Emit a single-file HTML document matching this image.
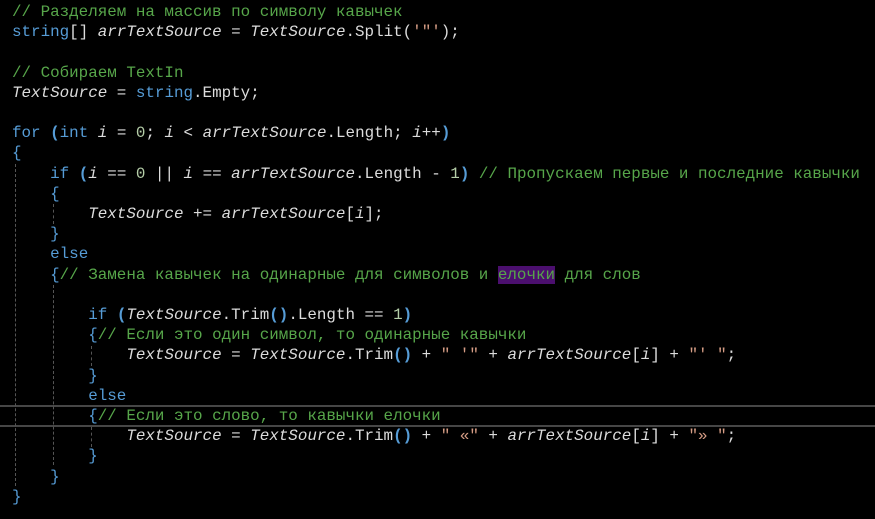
<!DOCTYPE html><html><head><meta charset="utf-8"><style>
html,body{margin:0;background:#000;width:875px;height:519px;overflow:hidden}
pre{margin:0;position:absolute;left:12px;top:2px;font-family:"Liberation Mono","DejaVu Sans Mono",monospace;font-size:15.88px;line-height:20.2px;color:#dcdcdc;white-space:pre}
.k{color:#569cd6}.c{color:#57a64a}.v{font-style:italic;color:#dcdcdc}.s{color:#d69d85}.n{color:#b5cea8}.p{color:#569cd6;font-weight:bold}.hl{background:#4b0f6e}
.g{position:absolute;width:0;border-left:1px dashed #555}
.cur{position:absolute;left:0;width:875px;top:405px;height:18px;border-top:2px solid #464646;border-bottom:2px solid #464646}
</style></head><body>
<div class="cur"></div>
<div class="g" style="left:15px;top:164px;height:322px"></div>
<div class="g" style="left:53px;top:204px;height:20px"></div>
<div class="g" style="left:53px;top:285px;height:180px"></div>
<div class="g" style="left:91px;top:346px;height:20px"></div>
<div class="g" style="left:91px;top:427px;height:20px"></div>
<pre><span class="c">// Разделяем на массив по символу кавычек</span>
<span class="k">string</span>[] <span class="v">arrTextSource</span> = <span class="v">TextSource</span>.Split(<span class="s">'"'</span>);

<span class="c">// Собираем TextIn</span>
<span class="v">TextSource</span> = <span class="k">string</span>.Empty;

<span class="k">for</span> <span class="p">(</span><span class="k">int</span> <span class="v">i</span> = <span class="n">0</span>; <span class="v">i</span> &lt; <span class="v">arrTextSource</span>.Length; <span class="v">i</span>++<span class="p">)</span>
<span class="k">{</span>
    <span class="k">if</span> <span class="p">(</span><span class="v">i</span> == <span class="n">0</span> || <span class="v">i</span> == <span class="v">arrTextSource</span>.Length - <span class="n">1</span><span class="p">)</span> <span class="c">// Пропускаем первые и последние кавычки</span>
    <span class="k">{</span>
        <span class="v">TextSource</span> += <span class="v">arrTextSource</span>[<span class="v">i</span>];
    <span class="k">}</span>
    <span class="k">else</span>
    <span class="k">{</span><span class="c">// Замена кавычек на одинарные для символов и <span class="hl">елочки</span> для слов</span>

        <span class="k">if</span> <span class="p">(</span><span class="v">TextSource</span>.Trim<span class="p">()</span>.Length == <span class="n">1</span><span class="p">)</span>
        <span class="k">{</span><span class="c">// Если это один символ, то одинарные кавычки</span>
            <span class="v">TextSource</span> = <span class="v">TextSource</span>.Trim<span class="p">()</span> + <span class="s">" '"</span> + <span class="v">arrTextSource</span>[<span class="v">i</span>] + <span class="s">"' "</span>;
        <span class="k">}</span>
        <span class="k">else</span>
        <span class="k">{</span><span class="c">// Если это слово, то кавычки елочки</span>
            <span class="v">TextSource</span> = <span class="v">TextSource</span>.Trim<span class="p">()</span> + <span class="s">" «"</span> + <span class="v">arrTextSource</span>[<span class="v">i</span>] + <span class="s">"» "</span>;
        <span class="k">}</span>
    <span class="k">}</span>
<span class="k">}</span></pre>
</body></html>
